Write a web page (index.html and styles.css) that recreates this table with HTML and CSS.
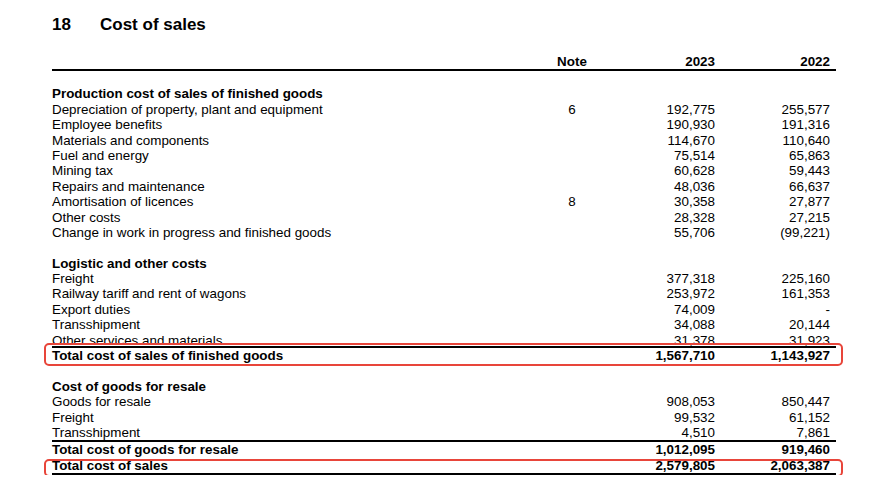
FILE: index.html
```html
<!DOCTYPE html>
<html lang="en">
<head>
<meta charset="utf-8">
<title>18 Cost of sales</title>
<link rel="stylesheet" href="styles.css">
</head>
<body>
<main class="page">
  <h1 class="title"><span class="title-num">18</span><span>Cost of sales</span></h1>
  <div class="table">
    <div class="row head"><span class="label"></span><span class="note">Note</span><span class="val">2023</span><span class="val">2022</span></div>

    <section class="group">
      <div class="row bold"><span class="label">Production cost of sales of finished goods</span></div>
      <div class="row"><span class="label">Depreciation of property, plant and equipment</span><span class="note">6</span><span class="val">192,775</span><span class="val">255,577</span></div>
      <div class="row"><span class="label">Employee benefits</span><span class="note"></span><span class="val">190,930</span><span class="val">191,316</span></div>
      <div class="row"><span class="label">Materials and components</span><span class="note"></span><span class="val">114,670</span><span class="val">110,640</span></div>
      <div class="row"><span class="label">Fuel and energy</span><span class="note"></span><span class="val">75,514</span><span class="val">65,863</span></div>
      <div class="row"><span class="label">Mining tax</span><span class="note"></span><span class="val">60,628</span><span class="val">59,443</span></div>
      <div class="row"><span class="label">Repairs and maintenance</span><span class="note"></span><span class="val">48,036</span><span class="val">66,637</span></div>
      <div class="row"><span class="label">Amortisation of licences</span><span class="note">8</span><span class="val">30,358</span><span class="val">27,877</span></div>
      <div class="row"><span class="label">Other costs</span><span class="note"></span><span class="val">28,328</span><span class="val">27,215</span></div>
      <div class="row"><span class="label">Change in work in progress and finished goods</span><span class="note"></span><span class="val">55,706</span><span class="val">(99,221)</span></div>
    </section>

    <section class="group">
      <div class="row bold"><span class="label">Logistic and other costs</span></div>
      <div class="row"><span class="label">Freight</span><span class="note"></span><span class="val">377,318</span><span class="val">225,160</span></div>
      <div class="row"><span class="label">Railway tariff and rent of wagons</span><span class="note"></span><span class="val">253,972</span><span class="val">161,353</span></div>
      <div class="row"><span class="label">Export duties</span><span class="note"></span><span class="val">74,009</span><span class="val">-</span></div>
      <div class="row"><span class="label">Transshipment</span><span class="note"></span><span class="val">34,088</span><span class="val">20,144</span></div>
      <div class="row"><span class="label">Other services and materials</span><span class="note"></span><span class="val">31,378</span><span class="val">31,923</span></div>
      <div class="row bold total total-overlap mark mark-a"><span class="label">Total cost of sales of finished goods</span><span class="note"></span><span class="val">1,567,710</span><span class="val">1,143,927</span></div>
    </section>

    <section class="group">
      <div class="row bold"><span class="label">Cost of goods for resale</span></div>
      <div class="row"><span class="label">Goods for resale</span><span class="note"></span><span class="val">908,053</span><span class="val">850,447</span></div>
      <div class="row"><span class="label">Freight</span><span class="note"></span><span class="val">99,532</span><span class="val">61,152</span></div>
      <div class="row"><span class="label">Transshipment</span><span class="note"></span><span class="val">4,510</span><span class="val">7,861</span></div>
      <div class="row bold total"><span class="label">Total cost of goods for resale</span><span class="note"></span><span class="val">1,012,095</span><span class="val">919,460</span></div>
      <div class="row bold grand mark mark-b"><span class="label">Total cost of sales</span><span class="note"></span><span class="val">2,579,805</span><span class="val">2,063,387</span></div>
    </section>
  </div>
</main>
</body>
</html>
```

FILE: styles.css
```css
* { box-sizing: border-box; }

html, body {
  margin: 0;
  padding: 0;
  background: #ffffff;
}

body {
  font-family: "Liberation Sans", Arial, sans-serif;
  color: #000000;
}

.page {
  width: 869px;
  padding: 15px 33px 0 52px;
}

.title {
  display: flex;
  margin: 0;
  height: 20px;
  line-height: 20px;
  font-size: 17px;
  font-weight: 700;
}

.title-num {
  width: 48px;
}

.table {
  margin-top: 20px;
  font-size: 13.4px;
}

.row {
  position: relative;
  display: flex;
  height: 15.4px;
  line-height: 15.4px;
  padding-right: 6px;
  white-space: nowrap;
}

.label {
  flex: 1;
}

.note {
  width: 56px;
  text-align: center;
}

.val {
  width: 115px;
  text-align: right;
}

.bold {
  font-weight: 700;
}

.head {
  font-weight: 700;
  height: 14.4px;
  line-height: 14.4px;
  border-bottom: 2px solid #000;
  box-sizing: content-box;
  margin-bottom: 15px;
}

.group + .group {
  margin-top: 15.4px;
}

.total {
  border-top: 2px solid #000;
  box-sizing: content-box;
}

.total-overlap {
  margin-top: -2px;
}

.grand {
  border-bottom: 2px solid #000;
  box-sizing: content-box;
}

.mark::after {
  content: "";
  position: absolute;
  left: -8px;
  right: -7px;
  border: 2px solid #e8453a;
  border-radius: 5px;
  pointer-events: none;
}

.mark-a::after {
  top: -5px;
  bottom: -3px;
}

.mark-b::after {
  top: 1px;
  bottom: -4px;
}
```
